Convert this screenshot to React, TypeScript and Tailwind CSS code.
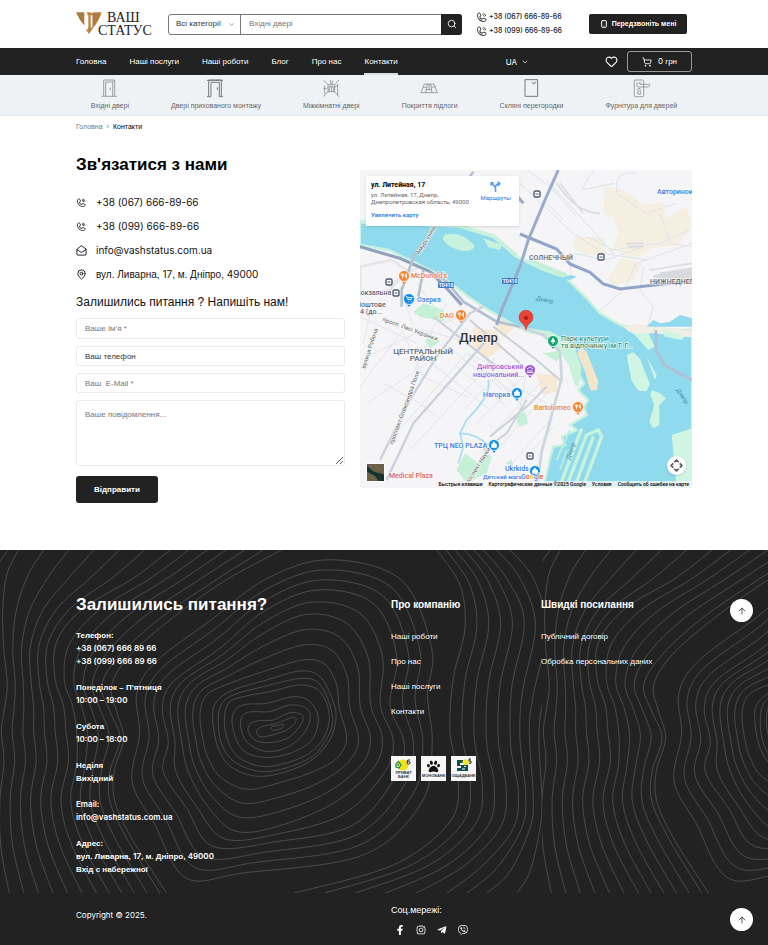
import type { ReactNode } from "react";
import { ArrowUp, ChevronDown, Heart, MailOpen, MapPin, Search, ShoppingCart, Smartphone } from "lucide-react";
import { FaFacebookF, FaInstagram, FaPaw, FaTelegramPlane, FaViber } from "react-icons/fa";
import { PiPhoneCall } from "react-icons/pi";

type Point = [number, number];

const latin = "font-[Inter,sans-serif]";

/** Sets Latin letters and digits in Inter; Cyrillic keeps the page font. */
function Mixed({ text }: { text: string }) {
  return (
    <>
      {text.split(/([A-Za-z0-9+@()©:][A-Za-z0-9+@()©:. –-]*)/).map((part, i) =>
        i % 2 ? (
          <span key={i} className={latin}>
            {part}
          </span>
        ) : (
          part
        ),
      )}
    </>
  );
}

/* ---------- Contour pattern of the footer ---------- */

function smooth(points: Point[], closed: boolean) {
  const n = points.length;
  const at = (i: number) => (closed ? points[(i + n) % n] : points[Math.max(0, Math.min(n - 1, i))]);
  let d = `M${points[0][0]} ${points[0][1]}`;
  for (let i = 0; i < (closed ? n : n - 1); i++) {
    const [a, b, c, e] = [at(i - 1), at(i), at(i + 1), at(i + 2)];
    d += `C${b[0] + (c[0] - a[0]) / 6} ${b[1] + (c[1] - a[1]) / 6} ${c[0] - (e[0] - b[0]) / 6} ${c[1] - (e[1] - b[1]) / 6} ${c[0]} ${c[1]}`;
  }
  return closed ? d + "Z" : d;
}

function between(from: Point[], to: Point[], steps: number): Point[][] {
  return Array.from({ length: steps }, (_, s) =>
    from.map(([x, y], i): Point => [x + ((to[i][0] - x) * s) / steps, y + ((to[i][1] - y) * s) / steps]),
  );
}

const peak: Point[][] = [
  [[815, 545], [832, 542], [850, 538], [845, 550], [818, 556]],
  [[770, 560], [785, 545], [830, 535], [880, 517], [887, 530], [860, 555], [810, 572], [780, 575]],
  [[745, 560], [750, 538], [775, 527], [820, 525], [870, 503], [905, 510], [905, 535], [870, 575], [820, 592], [770, 588]],
  [[722, 545], [728, 512], [755, 500], [810, 500], [870, 480], [920, 490], [930, 525], [905, 575], [850, 612], [790, 618], [740, 590]],
  [[697, 540], [705, 495], [740, 478], [800, 475], [880, 455], [930, 470], [955, 520], [935, 585], [870, 625], [790, 637], [725, 612]],
  [[673, 530], [685, 475], [730, 455], [810, 440], [900, 420], [960, 440], [988, 510], [970, 580], [910, 635], [800, 665], [720, 640], [685, 590]],
  [[655, 540], [663, 480], [700, 450], [790, 425], [910, 400], [965, 425], [998, 520], [975, 590], [920, 645], [800, 680], [710, 655], [668, 605]],
  [[638, 520], [650, 470], [700, 435], [800, 405], [900, 378], [960, 395], [1000, 470], [1007, 530], [980, 600], [910, 660], [790, 694], [700, 670], [655, 610]],
];
const slopeA: Point[] = [[910, 345], [790, 380], [690, 415], [620, 450], [600, 510], [610, 590], [625, 640], [660, 695], [740, 733], [850, 710], [940, 680], [1010, 640], [1040, 580], [1018, 490], [1010, 420], [975, 358]];
const slopeB: Point[] = [[920, 208], [790, 265], [680, 345], [575, 410], [535, 480], [545, 590], [565, 680], [620, 780], [705, 858], [830, 845], [1000, 775], [1120, 670], [1147, 580], [1112, 480], [1105, 340], [1040, 235]];
const slopeC: Point[] = [[950, 135], [790, 200], [660, 310], [520, 410], [487, 490], [505, 590], [490, 680], [560, 790], [640, 905], [830, 890], [1060, 840], [1190, 690], [1212, 590], [1170, 480], [1190, 330], [1120, 175]];
const slopeD: Point[] = [[1000, 14], [800, 70], [620, 200], [450, 330], [385, 430], [390, 560], [365, 720], [430, 850], [530, 1030], [700, 1015], [1100, 960], [1290, 800], [1325, 600], [1320, 440], [1330, 300], [1230, 80]];
const left0: Point[] = [[55, 15], [20, 90], [8, 200], [12, 320], [22, 420], [12, 500], [4, 560], [12, 650], [0, 760], [2, 900], [28, 1045]];
const left1: Point[] = [[510, 15], [400, 100], [250, 190], [170, 290], [165, 400], [190, 480], [198, 560], [205, 650], [183, 770], [215, 900], [290, 1045]];
const left2: Point[] = [[790, 15], [640, 110], [480, 220], [360, 330], [305, 420], [330, 500], [360, 580], [330, 680], [330, 770], [380, 880], [480, 1045]];
const left3: Point[] = [[900, 15], [700, 110], [540, 230], [420, 330], [365, 420], [370, 500], [382, 580], [355, 680], [360, 770], [410, 880], [530, 1060]];
const right0: Point[] = [[1310, 15], [1380, 120], [1395, 250], [1360, 400], [1350, 560], [1375, 700], [1350, 830], [1180, 960], [880, 1045]];
const right1: Point[] = [[1450, 15], [1520, 100], [1573, 230], [1535, 430], [1532, 600], [1555, 740], [1540, 850], [1450, 960], [1340, 1045]];
const right2: Point[] = [[1530, 15], [1600, 100], [1640, 250], [1600, 450], [1588, 560], [1600, 760], [1590, 850], [1530, 980], [1460, 1045]];
const right3: Point[] = [[1660, 15], [1680, 100], [1690, 250], [1640, 420], [1617, 560], [1626, 760], [1620, 850], [1590, 980], [1550, 1045]];

const contourPath = [
  ...[...peak, ...between(slopeA, slopeB, 3), ...between(slopeB, slopeC, 2), ...between(slopeC, slopeD, 4)].map((p) => smooth(p, true)),
  ...[
    ...between(left0, left1, 6),
    ...between(left1, left2, 5),
    ...between(left2, left3, 2),
    ...between(right0, right1, 5),
    ...between(right1, right2, 2),
    right2,
    right3,
  ].map((p) => smooth(p, false)),
  "M25 15Q5 40 0 50",
].join("");

function Contours() {
  return (
    <svg className="absolute inset-0 h-full w-full" aria-hidden="true">
      <defs>
        <pattern id="contours" width="542" height="343" patternUnits="userSpaceOnUse">
          <path d={contourPath} transform="translate(0 -5) scale(.3333)" fill="none" stroke="#4f4f4f" strokeWidth="2.6" />
        </pattern>
      </defs>
      <rect width="100%" height="100%" fill="url(#contours)" />
    </svg>
  );
}

/* ---------- Header ---------- */

function Logo() {
  return (
    <a href="#" className="flex w-[76px] shrink-0 items-start font-['Liberation_Serif',serif] text-[14px] leading-[13px] text-[#222]" aria-label="Ваш Статус">
      <svg width="26" height="23" viewBox="0 0 78 69" className="mt-px -mr-1 shrink-0">
        <path d="M0 1h25v40Q10 25 0 1Z" fill="#bd8444" />
        <path d="M3 3l21 31M10 2l14 22M18 2l6 10" stroke="#7d5a35" strokeWidth="2" />
        <path d="M29 1h15v40q0 7 5 7V10H34V3M53 1h24Q69 28 50 50L39 66 29 52q8 3 8-6V6" fill="#bd8444" />
        <path d="M56 5v32M63 5v20M70 5v10" stroke="#8c6338" strokeWidth="2" />
      </svg>
      <span className="flex flex-col">
        <span className="pl-[9px]">ВАШ</span>
        <span>СТАТУС</span>
      </span>
    </a>
  );
}

function TopBar() {
  return (
    <div className="flex h-12 items-center px-19">
      <Logo />
      <form className="ml-4 flex h-[21px] flex-1 rounded-[3px] border border-[#777]" onSubmit={(e) => e.preventDefault()}>
        <label className="relative flex w-[72px] items-center border-r border-[#777]">
          <span className="sr-only">Категорія</span>
          <select className="w-full appearance-none bg-transparent pl-[7px] text-[8px] leading-[12px] text-[#333] outline-none">
            <option>Всі категорії</option>
          </select>
          <ChevronDown className="pointer-events-none absolute right-[5px] size-[7px] text-[#555]" strokeWidth={2} />
        </label>
        <input aria-label="Пошук" placeholder="Вхідні двері" className="min-w-0 flex-1 px-2 text-[8px] outline-none placeholder:text-[#777]" />
        <button aria-label="Шукати" className="-my-px -mr-px flex w-[21px] items-center justify-center rounded-r-[3px] bg-[#222] text-white">
          <Search className="size-[10px]" strokeWidth={2} />
        </button>
      </form>
      <div className={`${latin} ml-[14px] flex w-[113px] shrink-0 flex-col text-[7px] leading-[14px] font-medium text-[#222]`}>
        {["+38 (067) 666-89-66", "+38 (099) 666-89-66"].map((phone) => (
          <a key={phone} href={`tel:${phone}`} className="flex h-[14px] items-center gap-px whitespace-nowrap">
            <PiPhoneCall className="size-3" />
            {phone}
          </a>
        ))}
      </div>
      <button className="mr-[5px] flex h-5 w-[98px] shrink-0 items-center justify-center gap-1 rounded-[2px] bg-[#222] text-[7px] font-bold whitespace-nowrap text-white">
        <Smartphone className="size-[8px]" strokeWidth={3} />
        Передзвоніть мені
      </button>
    </div>
  );
}

function Navigation() {
  const links = ["Головна", "Наші послуги", "Наші роботи", "Блог", "Про нас", "Контакти"];
  return (
    <nav className="flex h-[27px] items-center bg-[#222] px-19 text-[8px] text-white">
      <ul className="flex h-full gap-[23px]">
        {links.map((link) => (
          <li key={link} className={`flex items-center border-y-2 border-transparent whitespace-nowrap ${link === "Контакти" ? "border-b-[#ddd]" : ""}`}>
            <a href="#">{link}</a>
          </li>
        ))}
      </ul>
      <button className="ml-auto flex items-center gap-1">
        <span className={latin}>UA</span>
        <ChevronDown className="size-[8px]" />
      </button>
      <button aria-label="Обране" className="ml-[76px]">
        <Heart className="size-[13px]" strokeWidth={2} />
      </button>
      <button className="ml-[9px] flex h-[21px] w-[65px] items-center justify-center gap-1.5 rounded-[3px] border border-[#999]">
        <ShoppingCart className="size-[10px]" strokeWidth={2} />
        <span>
          <Mixed text="0 грн" />
        </span>
      </button>
    </nav>
  );
}

const categories: { name: string; icon: ReactNode }[] = [
  { name: "Вхідні двері", icon: <path d="M11 51V3h33v48M5 52h46M17 51V9h21v43M31 26v7M38 9l6-6" /> },
  { name: "Двері прихованого монтажу", icon: <path strokeWidth="3" d="M8 51V3h38v48M3 4h48M3 53h13M38 53h13M15 51V10h25v41M34 25v8" /> },
  { name: "Міжкімнатні двері", icon: <path d="M4 3l14 14h20L51 3M4 53l14-15h20l13 15M18 17v21M38 17v21M8 20v25M47 15v34M22 38V23h12v15M28 23v15M25 3l3 14 5-12M4 28h10M38 25l9-6" /> },
  { name: "Покриття підлоги", icon: <path d="M13 15h29l10 26H3ZM22 15l-5 26M32 15l4 26M10 25h10M18 32h17M35 24h11M27 15v17" /> },
  { name: "Скляні перегородки", icon: <path strokeWidth="3" d="M9 2h38v50H9ZM29 10l6 5 7-7M35 15l4-5" /> },
  { name: "Фурнітура для дверей", icon: <path d="M10 3h22q3 0 3 3v44q0 3-3 3H10q-3 0-3-3V6q0-3 3-3ZM20 12a6 6 0 1 0 0 12h29q4-1 4-5v-3H24M20 12h7M18 35a4 4 0 1 1 6 0l2 10h-9Z" /> },
];

function Categories() {
  return (
    <ul className="flex h-[41px] justify-center gap-[42px] border-b border-[#e2e6ea] bg-[#eef2f5] pt-1 text-[7px] text-[#666]">
      {categories.map(({ name, icon }) => (
        <li key={name}>
          <a href="#" className="flex flex-col items-center gap-[3px] whitespace-nowrap">
            <svg width="19" height="19" viewBox="0 0 57 57" fill="none" stroke="#777" strokeWidth="2" strokeLinejoin="round" aria-hidden="true">
              {icon}
            </svg>
            <span className="leading-[10px]">{name}</span>
          </a>
        </li>
      ))}
    </ul>
  );
}

/* ---------- Contact block ---------- */

const field = "block w-full rounded-[3px] border border-[#eaeaea] bg-white px-2 text-[8px] outline-none";

function ContactForm() {
  const contacts = [
    { icon: PiPhoneCall, text: "+38 (067) 666-89-66" },
    { icon: PiPhoneCall, text: "+38 (099) 666-89-66" },
    { icon: MailOpen, text: "info@vashstatus.com.ua" },
    { icon: MapPin, text: "вул. Ливарна, 17, м. Дніпро, 49000" },
  ];
  return (
    <section className="min-w-0 flex-[269]">
      <h1 className="text-[17px] leading-6 font-bold text-black">Зв'язатися з нами</h1>
      <ul className="mt-[13px] text-[10px] leading-6 text-[#111]">
        {contacts.map(({ icon: Icon, text }) => (
          <li key={text} className="flex h-6 items-center gap-[9px]">
            <Icon className="size-[11px]" />
            <span>
              <Mixed text={text} />
            </span>
          </li>
        ))}
      </ul>
      <h2 className="mt-2 text-[12px] leading-4 text-[#111]">Залишились питання ? Напишіть нам!</h2>
      <form className="mt-2" onSubmit={(e) => e.preventDefault()}>
        <div className="flex flex-col gap-[7px]">
          <input aria-label="Ім'я" placeholder="Ваше Ім'я *" className={`${field} h-[21px] placeholder:text-[#777]`} />
          <input aria-label="Телефон" placeholder="Ваш телефон" className={`${field} h-5 placeholder:text-[#333]`} />
          <input aria-label="E-Mail" placeholder="Ваш  E-Mail *" className={`${field} h-5 placeholder:text-[#777]`} />
          <textarea aria-label="Повідомлення" placeholder="Ваше повідомлення..." className={`${field} h-[66px] pt-2 placeholder:text-[#777]`} />
        </div>
        <button className="mt-2.5 h-[27px] w-[82px] rounded-[3px] bg-[#222] text-[8px] font-bold text-white">Відправити</button>
      </form>
    </section>
  );
}

function Poi({ x, y, color, kind }: { x: number; y: number; color: string; kind: "food" | "bag" | "cart" | "tree" | "hall" }) {
  return (
    <g transform={`translate(${x} ${y})`}>
      <path d="M-3 4L0 8L3 4" fill={color} />
      <circle r="5.5" fill={color} stroke="#fff" strokeWidth="0.8" />
      {kind === "food" && <path d="M-2.5-2.500v2h2v-2M-1.500-2.500v5M2.500 2.500v-5q-2 1-1.500 3h1.500" stroke="#fff" fill="none" strokeWidth="0.8" />}
      {kind === "bag" && <path d="M-2.500-1h5v3.500h-5ZM-1.200-1q0-2 1.200-2t1.200 2" stroke="#fff" fill="#fff" strokeWidth="0.6" />}
      {kind === "cart" && <path d="M-3-2.500h1l1 3h3l1-2h-4M-1 2.500h.5M2 2.500h.5" stroke="#fff" fill="none" strokeWidth="0.9" />}
      {kind === "tree" && <path d="M0-3.500L2.500 1H.5v2h-1V1h-2Z" fill="#fff" />}
      {kind === "hall" && <path d="M-3-1L0-3L3-1M-2 0v2M0 0v2M2 0v2M-3 2.500h6" stroke="#fff" fill="none" strokeWidth="0.8" />}
    </g>
  );
}

function RoadShield({ x, y }: { x: number; y: number }) {
  return (
    <g>
      <rect x={x} y={y} width="16" height="6" rx="1" fill="#4576c9" />
      <text x={x + 8} y={y + 5} fontSize="5" fill="#fff" textAnchor="middle" fontWeight="700">
        Т0410
      </text>
    </g>
  );
}

function Station({ x, y }: { x: number; y: number }) {
  return (
    <g transform={`translate(${x} ${y})`}>
      <rect x="-3" y="-3" width="6" height="6" rx="1.500" fill="#fff" stroke="#4c5a70" strokeWidth="1.400" />
      <path d="M-1.500 0h3" stroke="#4c5a70" />
    </g>
  );
}

function MapDrawing() {
  return (
    <svg viewBox="0 0 332 318" preserveAspectRatio="xMidYMid slice" className="h-full w-full font-[Roboto,sans-serif]" role="img" aria-label="Карта: Дніпро">
      <rect width="332" height="318" fill="#f5f4f6" />
      <g transform="scale(.3333)" fill="none">
        {/* sandy and built-up areas */}
        <path d="M735 55q35-10 70 15l45 35 60-10 10 50 60-35 16 60-45 55-75 10-50 30-70-25 20-50-15-45-30-15ZM645 200l85 5 10 45-60 5-40-20ZM745 320l40-55 60 15-25 50-70 20Z" fill="#f5efe1" />
        <path d="M340 470l75 15 10 50-45 30-45-40ZM430 440l30 35-30 30-20-30ZM530 610l60 5 2 50-45 10Z" fill="#f6ead5" />
        <path d="M0 290l95-20 45 30-50 60-90 15ZM85 350l90-60" stroke="#e4e6ea" strokeWidth="8" />
        {/* minor streets */}
        <path
          d="M0 570l190-90 110 30M20 700l180-120M0 650l130-170M70 640l110 60 50 40M100 800l220-250 90 40M150 840l260-280M190 560l200 160M250 520l180 140M300 500l170 150M220 480l-60 130M380 600l110 110M130 490l60 130 130 60M310 720l140-140M350 760l140-140M390 800l160-170M420 830l150-170M450 640l110 60M440 900l130-150M520 840l60-70M500 600l-30 170M0 440l170 80M30 430l-20 90M120 350l40 120M170 340l90 120M200 400l150 110M250 460l100-40M260 400l-60 110M290 590l150 120M330 560l140 120"
          stroke="#e3e5ea" strokeWidth="3"
        />
        <path d="M480 40l160 150 90 60 130 20M640 250l100 20 110-40M560 30l200 220M500 0l70 50 80 90M830 10q-70-10-60 60l90 60 90-30M700 0l-35 60 100-20M990 180l-90 40-140 20-80-40M700 440l90-80 40-80 166-60M860 480l20-70-40-50 10-70M630 280l5 50M560 100l50 50M900 130l30 90 66 10" stroke="#dfe2e8" strokeWidth="3" />
        <path d="M590 40q60 90 130 90M600 40l70 90M900 310l96-15M880 320l116 5M870 300l126-20M800 220h50M805 230h45" stroke="#dadce1" strokeWidth="5" />
        <path d="M880 315l116-22v38l-100-6Z" fill="#d9dadd" />
        {/* parks */}
        <path d="M160 425l30-25 60 20 0 35-70-15ZM195 510l30-15 15 20-30 20ZM465 735l30-10 10 35-25 10ZM290 900l25-50 40 30 20-40 20 20-15 50-60 30ZM440 270l55 20 130 50-5-30-100-40ZM435 880l20-10 5 20ZM610 540l-20 35-40-25ZM100 410l15 15" fill="#c5f0d8" />
        {/* river */}
        <path
          d="M0 155L205 165L300 170L400 200L470 260L540 295L620 325L680 385L720 430L780 465L850 480L996 480V954H550L570 865L580 830L615 825L605 800L650 780L630 765L680 735L672 712L684 690L655 660L672 640L645 590L620 535L570 490L480 475L420 440L385 420L325 380L240 315L150 270L85 240L0 225Z"
          fill="#90daee" stroke="#c9f2dc" strokeWidth="7"
        />
        <path d="M0 155L205 163L300 168L400 198L470 258" stroke="#c9f2dc" strokeWidth="12" />
        {/* islands */}
        <path d="M253 195q45-15 90 30 0 20-30 18-45-5-65-35ZM370 205l55 20-5 15-35-8Z" fill="#c9f2dc" />
        <path d="M790 472l40-10 166 20v20l-60-5-50-8-60 5-20-10Z" fill="#f1eee6" />
        <path d="M490 472l80 12 70 38 25 70-8 55-12 0-18-60-35-55-50-35-52-12Z" fill="#c9f2dc" />
        <path d="M660 530l20 15 35 90-5 25-18 2-18-60-22-50Z" fill="#f2e5c9" />
        <path d="M800 555l20-8 20 20 30 75-10 22-25-2-20-30Z" fill="#d0f5e2" />
        <path d="M820 490l45 0 20 40-20 10ZM860 560l30 55-5 15ZM905 475l70 25-10 10-50-10ZM875 660l25 10 18 15-20 20 0 60-18 10-12-20 15-50-12-30Z" fill="#d0f5e2" />
        <path d="M935 795l61-20v179h-46Z" fill="#d0f5e2" />
        <path d="M625 935l55-140 35-15 10 20-50 135M650 935l50-135M605 935l60-160" stroke="#c9f2dc" strokeWidth="10" />
        <path d="M590 870l40-90M600 900l20-60" stroke="#b8ecdf" strokeWidth="6" />
        <path d="M860 470l20-20 20 10 30-5 30-20 36 10v25h-120ZM600 325l30-10 20 5-20 10Z" fill="#90daee" />
        <path d="M385 630q5 30-15 60t-50 60l-20 40 10 40-15 50M300 790q50 0 90 40" stroke="#a6dcf3" strokeWidth="5" />
        {/* main roads */}
        <path d="M480 470l70 25 50 50 5 80-60 220-20 150" stroke="#cdd5e1" strokeWidth="8" />
        <path d="M0 230l120 35 90 40 50 30 50 60 100 60 70 15" stroke="#b3bfd2" strokeWidth="8" />
        <path d="M0 230l120 35 90 40 50 50 45 50" stroke="#91a2bf" strokeWidth="9" />
        <path d="M175 240l80-110L340 5M165 250l-40 110 0 50M190 300l-15 80" stroke="#b7c0ce" strokeWidth="8" />
        <path d="M60 870l90-180 80-130 100-130 40-20M80 930l80-170 220-250" stroke="#cbd1dc" strokeWidth="7" />
        <path d="M595 0l-40 90-50 120-25 80-55 130-15 45M430 30l60 70" stroke="#9aaccb" strokeWidth="9" />
        <path d="M480 192l110 45 40 45 60 25 40 35 50 15 216-25" stroke="#91a5cb" strokeWidth="9" />
        <path d="M400 470l130 100 70 60M390 800l110-90 60-60M370 840l70-50 60-100M220 440l190 150M330 450l150 130" stroke="#ccd1da" strokeWidth="6" />
        <path d="M888 480l0 60 25 45 83 45" stroke="#b3bfd2" strokeWidth="8" />
      </g>
      <RoadShield x={78} y={112} />
      <RoadShield x={142} y={108} />
      <Station x={177} y={24} />
      <Station x={241} y={87} />
      <Station x={29} y={112} />
      <Station x={36} y={123} />
      <Station x={170} y={286} />
      <Poi x={44} y={106} color="#f58430" kind="food" />
      <Poi x={49} y={129} color="#118ee9" kind="cart" />
      <Poi x={101} y={145} color="#f58430" kind="food" />
      <Poi x={193} y={171} color="#16a374" kind="tree" />
      <Poi x={170} y={200} color="#9b58d6" kind="hall" />
      <Poi x={157} y={223} color="#118ee9" kind="bag" />
      <Poi x={218} y={237} color="#f58430" kind="food" />
      <Poi x={134} y={275} color="#118ee9" kind="bag" />
      <Poi x={175} y={301} color="#118ee9" kind="bag" />
      <g fontSize="7" fontWeight="500" stroke="#fff" strokeWidth="1" paintOrder="stroke">
        <g fill="#e77b2d">
          <text x="51" y="108">McDonald's</text>
          <text x="80" y="148">DAO</text>
          <text x="174" y="240">Bartolomeo</text>
        </g>
        <g fill="#3578e5">
          <text x="57" y="132">Озерка</text>
          <text x="123" y="227">Нагорка</text>
          <text x="74" y="278">ТРЦ NEO PLAZA</text>
          <text x="145" y="301">Ukrkids</text>
          <text x="297" y="24">Авторинок</text>
          <text x="123" y="309" fontSize="6">Детский мага</text>
        </g>
        <text x="161" y="309">
          <tspan fill="#4285f4">G</tspan><tspan fill="#ea4335">o</tspan><tspan fill="#fbbc05">o</tspan><tspan fill="#4285f4">g</tspan><tspan fill="#34a853">l</tspan><tspan fill="#ea4335">e</tspan>
        </text>
        <g fill="#a05ad8">
          <text x="117" y="199">Дніпровський</text>
          <text x="113" y="207">національний...</text>
        </g>
        <g fill="#37967d">
          <text x="201" y="171">Парк культури</text>
          <text x="201" y="178">та відпочинку ім Т. Г...</text>
        </g>
        <text x="29" y="308" fill="#e05d65">Medical Plaza</text>
        <g fill="#5b6575">
          <text x="-4" y="125">Вокзальна</text>
          <text x="-4" y="137">Поштове</text>
          <text x="0" y="144">4 (до...</text>
          <text x="169" y="90">СОЛНЕЧНЫЙ</text>
          <text x="290" y="114">НИЖНЕДНЕП</text>
          <text y="184" fontSize="8" textAnchor="middle"><tspan x="63">ЦЕНТРАЛЬНЫЙ</tspan><tspan x="63" dy="7">РАЙОН</tspan></text>
        </g>
        <g fontSize="6" fontWeight="400" fill="#555b63">
          <text transform="translate(59 85) rotate(-58)">Амурський міст</text>
          <text transform="translate(5 199) rotate(-72)">вулиця Робоча</text>
          <text transform="translate(33 275) rotate(-70)">проспект Олександра Поля</text>
          <text transform="translate(22 151) rotate(20)">просп. Лесі Українки</text>
          <text transform="translate(107 317) rotate(-58)">проспект Науки</text>
        </g>
      </g>
      <g fontSize="6" fontStyle="italic" fill="#3d8eaa">
        <text transform="translate(176 130) rotate(12)">Днепр</text>
        <text transform="translate(316 220) rotate(57)">Днепр</text>
        <text transform="translate(210 290) rotate(-72)">Днепр</text>
      </g>
      <text x="99" y="172" fontSize="13" fontWeight="500" fill="#333" stroke="#fff" strokeWidth="1" paintOrder="stroke">Днепр</text>
      <path d="M166 160q-1-5-4-7a7 7 0 1 1 8 0q-3 2-4 7Z" fill="#ea4335" stroke="#c5221f" strokeWidth="0.500" />
      <circle cx="166" cy="148" r="2" fill="#a32018" />
    </svg>
  );
}

function LocationMap() {
  return (
    <section className="relative mt-[17px] h-[318px] min-w-0 flex-[332] overflow-hidden font-[Roboto,sans-serif]">
      <MapDrawing />
      <div className="absolute top-1.5 left-1.5 flex h-[50px] w-[153px] justify-between bg-white py-1 pr-2 pl-[5px] shadow-sm">
        <div className="whitespace-nowrap">
          <p className="text-[7px] leading-[10px] font-bold text-black">ул. Литейная, 17</p>
          <p className="mt-px text-[6px] leading-[7px] text-[#666]">
            ул. Литейная, 17, Днепр,
            <br />
            Днепропетровская область, 49000
          </p>
          <a href="#" className="mt-[5px] block text-[6px] leading-[10px] font-medium text-[#1a73e8]">Увеличить карту</a>
        </div>
        <a href="#" className="flex flex-col items-center text-[6px] leading-[9px] text-[#1a73e8]">
          <svg width="13" height="13" viewBox="0 0 24 24" fill="none" stroke="#5b9cf5" strokeWidth="3" aria-hidden="true">
            <path d="M12 22v-8L5 6M12 14q0-7 7-7M16 3l4 4-4 4M4 10V5h5" />
          </svg>
          Маршруты
        </a>
      </div>
      <button aria-label="Спутник" className="absolute bottom-1.5 left-1.5 size-[19px] overflow-hidden border border-white bg-[#6b5e47]">
        <svg viewBox="0 0 18 18" className="h-full w-full">
          <path d="M0 2l7 6 11 3v7h-6L9 13 0 8Z" fill="#16332d" />
          <path d="M2 13l6 3M9 3l7 3M3 1l3 3" stroke="#91846a" strokeDasharray="1 1" />
        </svg>
      </button>
      <button aria-label="Управление камерой" className="absolute right-1.5 bottom-[13px] flex size-[19px] items-center justify-center rounded-full bg-white shadow">
        <svg width="13" height="13" viewBox="0 0 24 24" fill="none" stroke="#555" strokeWidth="3" aria-hidden="true">
          <path d="M8 6l4-4 4 4M8 18l4 4 4-4M6 8l-4 4 4 4M18 8l4 4-4 4" />
        </svg>
      </button>
      <p className="absolute right-0 bottom-0 flex h-[7px] items-center gap-[6px] bg-[#f5f5f5]/80 px-[3px] text-[5px] leading-[7px] font-medium whitespace-nowrap text-black">
        <span>Быстрые клавиши</span>
        <span>Картографические данные ©2025 Google</span>
        <a href="#">Условия</a>
        <a href="#">Сообщить об ошибке на карте</a>
      </p>
    </section>
  );
}

/* ---------- Footer ---------- */

function UpButton() {
  return (
    <button aria-label="Нагору" className="absolute right-[15px] flex size-[23px] items-center justify-center rounded-full bg-white text-[#333]">
      <ArrowUp className="size-[10px]" strokeWidth={2} />
    </button>
  );
}

const infoGroups = [
  ["Телефон:", "+38 (067) 666 89 66", "+38 (099) 666 89 66"],
  ["Понеділок – П'ятниця", "10:00 – 19:00"],
  ["Субота", "10:00 – 18:00"],
  ["Неділя", "Вихідний"],
  ["Email:", "info@vashstatus.com.ua"],
  ["Адрес:", "вул. Ливарна, 17, м. Дніпро, 49000", "Вхід с набережної"],
];

function LinkColumn({ title, links }: { title: string; links: string[] }) {
  return (
    <div>
      <h3 className="text-[10px] leading-[14px] font-bold">{title}</h3>
      <ul className="mt-[18px] flex flex-col gap-3 text-[8px] leading-[13px]">
        {links.map((link) => (
          <li key={link} className="whitespace-nowrap">
            <a href="#">{link}</a>
          </li>
        ))}
      </ul>
    </div>
  );
}

const bankTile = "flex size-[25px] flex-col items-center bg-[#f6f6f6] pt-[2px] text-[4px] leading-[4px] font-bold text-[#333]";

function Banks() {
  return (
    <div className="mt-[38px] flex gap-[5px]">
      <div className={bankTile}>
        <svg width="17" height="13" viewBox="0 0 17 13" aria-hidden="true">
          <circle cx="8" cy="7" r="5.500" fill="#f2e313" />
          <path d="M4 3L1 6v3l3 1 2-3-2-3M3 6v2" fill="none" stroke="#22866f" strokeWidth="1.300" />
          <path d="M15 2q-3-1-3 2t2 2 1-2-3 0" fill="none" stroke="#333" />
        </svg>
        <span>ПРИВАТ</span>
        <span>БАНК</span>
      </div>
      <div className={bankTile}>
        <span className="flex h-4 items-center text-[#111]">
          <FaPaw size={13} />
        </span>
        <span>МОНОБАНК</span>
      </div>
      <div className={bankTile}>
        <svg width="17" height="16" viewBox="0 0 17 16" aria-hidden="true">
          <path d="M2 2h6v3H5v2h8v6H2v-3h4V8H2Z" fill="#0d4e4a" />
          <path d="M7 11h3M9 8.500h2" stroke="#fff" />
          <path d="M10 1l4 2-1 4H9L7 4Z" fill="#f3e12b" />
          <path d="M16 1h-2v2q3-1 2 2-1 1-2 0" fill="none" stroke="#222" />
        </svg>
        <span>ОЩАДБАНК</span>
      </div>
    </div>
  );
}

const footerGrid = "relative grid grid-cols-[315fr_150fr_151fr] px-19 text-white";

function Footer() {
  return (
    <footer className="bg-[#222]">
      <div className="relative pt-[43px] pb-[17px]">
        <Contours />
        <div className={footerGrid}>
          <div>
            <h2 className="text-[17px] leading-6 font-bold">Залишились питання?</h2>
            <div className="mt-3 flex flex-col gap-[13px] text-[8px] leading-[13px] font-semibold">
              {infoGroups.map((lines) => (
                <div key={lines[0]}>
                  {lines.map((line) => (
                    <p key={line} className="h-[13px]">
                      <Mixed text={line} />
                    </p>
                  ))}
                </div>
              ))}
            </div>
          </div>
          <div className="pt-[5px]">
            <LinkColumn title="Про компанію" links={["Наші роботи", "Про нас", "Наші послуги", "Контакти"]} />
            <Banks />
          </div>
          <div className="pt-[5px]">
            <LinkColumn title="Швидкі посилання" links={["Публічний договір", "Обробка персональних даних"]} />
          </div>
        </div>
        <div className="absolute top-[49px] right-0">
          <UpButton />
        </div>
      </div>
      <div className="relative h-[53px]">
        <div className={footerGrid}>
          <p className={`${latin} pt-4 text-[8px] leading-3`}>Copyright © 2025.</p>
          <div className="pt-[11px]">
            <h3 className="text-[9px] leading-3">Соц.мережі:</h3>
            <div className="mt-[9px] flex gap-[11px] pl-1">
              <a href="#" aria-label="Facebook"><FaFacebookF size={10} /></a>
              <a href="#" aria-label="Instagram"><FaInstagram size={10} /></a>
              <a href="#" aria-label="Telegram"><FaTelegramPlane size={10} /></a>
              <a href="#" aria-label="Viber"><FaViber size={10} /></a>
            </div>
          </div>
        </div>
        <div className="absolute top-[15px] right-0">
          <UpButton />
        </div>
      </div>
    </footer>
  );
}

export default function App() {
  return (
    <div className="bg-white font-['Liberation_Sans',Arial,sans-serif]">
      <header>
        <TopBar />
        <Navigation />
        <Categories />
      </header>
      <nav aria-label="Хлібні крихти" className="flex gap-1 px-19 pt-[5px] text-[7px] leading-3 text-[#777]">
        <a href="#">Головна</a>
        <span aria-hidden="true">›</span>
        <span className="text-black">Контакти</span>
      </nav>
      <main className="flex gap-[15px] px-19 pt-5 pb-[47px]">
        <ContactForm />
        <LocationMap />
      </main>
      <Footer />
    </div>
  );
}
